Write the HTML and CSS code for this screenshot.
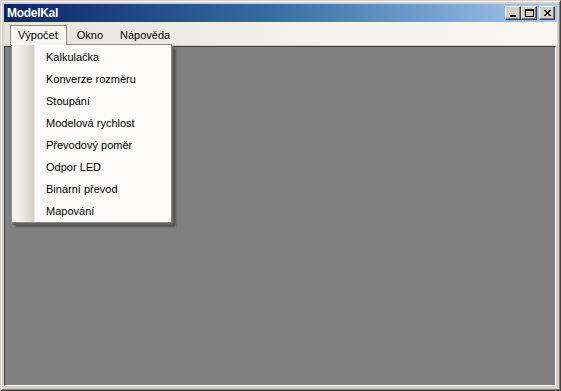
FILE: index.html
```html
<!DOCTYPE html>
<html lang="cs">
<head>
    <meta charset="UTF-8">
    <meta name="viewport" content="width=device-width, initial-scale=1.0">
    <title>ModelKal</title>
    <link rel="stylesheet" href="styles.css">
</head>
<body>
    <div class="window">
        <!-- titulek okna -->
        <div class="titlebar">
            <span class="title">ModelKal</span>
            <div class="caption-buttons">
                <span class="cap-btn">
                    <svg width="13" height="11" viewBox="0 0 13 11"><rect x="3" y="7" width="6" height="2" fill="#000"/></svg>
                </span>
                <span class="cap-btn">
                    <svg width="13" height="11" viewBox="0 0 13 11"><rect x="2.5" y="1.5" width="8" height="7" fill="none" stroke="#000"/><rect x="2" y="1" width="9" height="2" fill="#000"/></svg>
                </span>
                <span class="cap-btn close">
                    <svg width="13" height="11" viewBox="0 0 13 11"><path d="M3 2 L9 8 M4 2 L10 8 M9 2 L3 8 M10 2 L4 8" stroke="#000" stroke-width="1"/></svg>
                </span>
            </div>
        </div>

        <div class="menubar">
            <span class="menu-item active">Výpočet</span>
            <span class="menu-item">Okno</span>
            <span class="menu-item">Nápověda</span>
        </div>

        <div class="client"></div>

        <!-- rozbalene menu Výpočet -->
        <div class="dropdown">
            <div class="drop-item">Kalkulačka</div>
            <div class="drop-item">Konverze rozměru</div>
            <div class="drop-item">Stoupání</div>
            <div class="drop-item">Modelová rychlost</div>
            <div class="drop-item">Převodový poměr</div>
            <div class="drop-item">Odpor LED</div>
            <div class="drop-item">Binární převod</div>
            <div class="drop-item">Mapování</div>
        </div>
    </div>
</body>
</html>
```

FILE: styles.css
```css
body {
    margin: 0;
    font-family: Tahoma, "Liberation Sans", Arial, sans-serif;
    font-size: 11px;
    background: #d4d0c8;
}

.window {
    position: relative;
    width: 561px;
    height: 391px;
    box-sizing: border-box;
    display: flex;
    flex-direction: column;
    background: #d4d0c8;
    border-top: 1px solid #d4d0c8;
    border-left: 1px solid #d4d0c8;
    border-right: 1px solid #404040;
    border-bottom: 1px solid #404040;
    box-shadow: inset 1px 1px 0 #fff, inset -1px -1px 0 #808080;
    padding: 3px 3px 3px 3px;
}

.titlebar {
    height: 18px;
    display: flex;
    align-items: center;
    justify-content: space-between;
    background: linear-gradient(to right, #0a246a, #3a6ea5 50%, #a6caf0);
    padding: 0 2px 0 2px;
}

.title {
    color: #fff;
    font-weight: bold;
    font-size: 12px;
    padding-left: 1px;
    letter-spacing: -0.3px;
}

.caption-buttons {
    display: flex;
    gap: 0;
}

.cap-btn {
    width: 14px;
    height: 12px;
    display: flex;
    align-items: center;
    justify-content: center;
    background: #d4d0c8;
    border-top: 1px solid #fff;
    border-left: 1px solid #fff;
    border-right: 1px solid #404040;
    border-bottom: 1px solid #404040;
    box-shadow: inset -1px -1px 0 #808080;
}

.cap-btn.close {
    margin-left: 2px;
}

.menubar {
    height: 23px;
    display: flex;
    align-items: flex-end;
    background: linear-gradient(to right, #e6e3da, #f4f3ef 60%, #f7f6f3);
    padding-left: 6px;
    border-bottom: 1px solid #d4d0c8;
}

.menu-item {
    height: 19px;
    line-height: 18px;
    padding: 0 6px 0 9px;
    color: #000;
    border: 1px solid transparent;
    border-bottom: none;
}

.menu-item.active {
    background: #f6f5f1;
    border-color: #8d8b82;
    padding: 0 8px 0 7px;
    position: relative;
    z-index: 3;
}

.client {
    flex: 1;
    background: #808080;
    border-top: 1px solid #404040;
    border-left: 1px solid #404040;
    border-right: 1px solid #fff;
    border-bottom: 1px solid #fff;
    margin: 0 1px 1px 0;
}

.dropdown {
    position: absolute;
    left: 10px;
    top: 43px;
    width: 159px;
    padding: 1px 0 0 0;
    background: linear-gradient(to right, #f8f7f3, #e9e7e0 12px, #d2cfc6 22px, #fcfbf9 23px);
    border: 1px solid #8d8b82;
    box-shadow: 2px 2px 0 #606060, 4px 4px 2px rgba(0, 0, 0, 0.35);
    z-index: 2;
}

.drop-item {
    height: 22px;
    line-height: 22px;
    padding-left: 34px;
    color: #000;
}
```
